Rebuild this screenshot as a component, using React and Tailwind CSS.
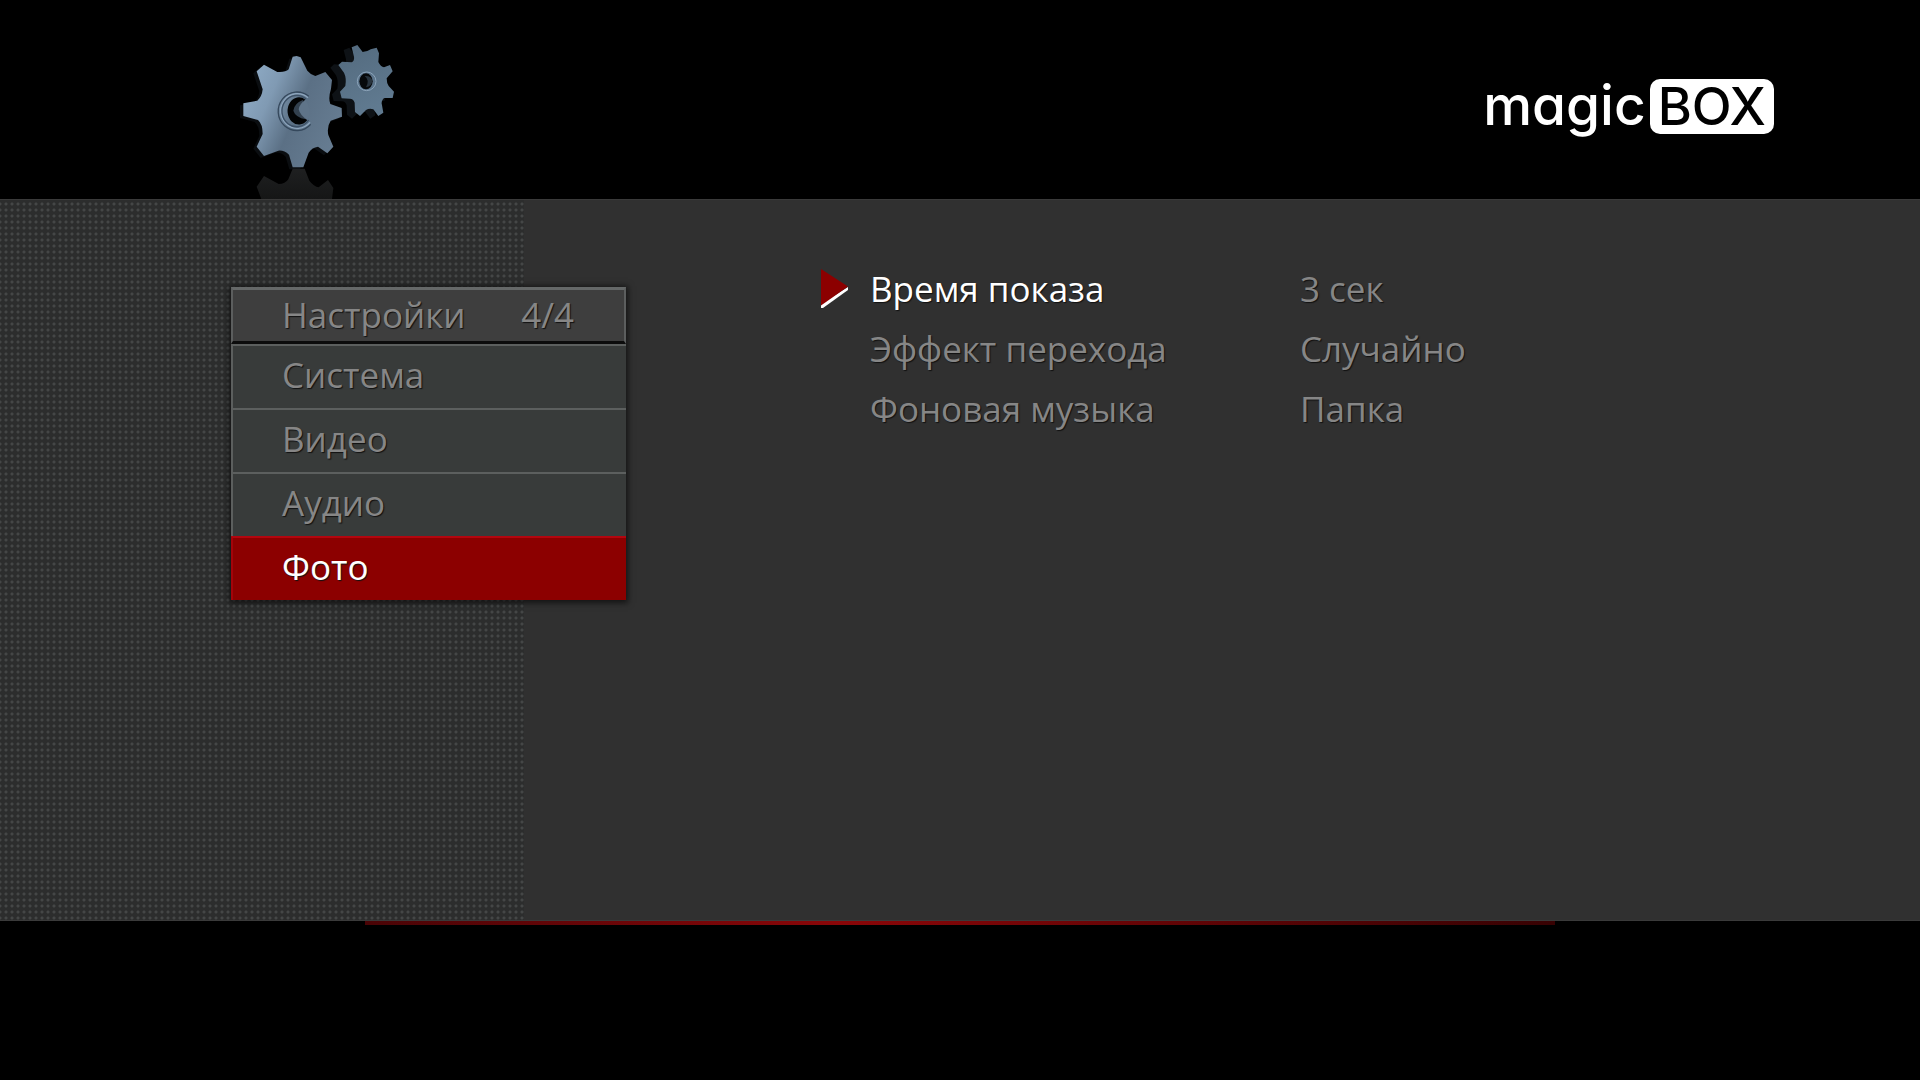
import { useState } from "react";
import clsx from "clsx";

const categories = ["Система", "Видео", "Аудио", "Фото"];

const settings = [
  { label: "Время показа", value: "3 сек" },
  { label: "Эффект перехода", value: "Случайно" },
  { label: "Фоновая музыка", value: "Папка" },
];

const bigGear =
  "M218 80L230 78L242 82L262 122Q272 134 286 138L316 126L336 150L333 176Q324 205 331 222L365 234L366 260L332 272Q320 290 325 315L340 350L322 370L294 350Q276 352 266 368L250 412L218 412L207 374Q192 360 175 362L132 378L110 350L128 312Q128 282 114 270L70 258L70 220L112 212Q126 200 128 178L110 124L132 104L172 126Q196 128 206 118Z";

const smallGear =
  "M395 52L412 45L428 66Q442 66 452 58L470 53L477 70L475 96Q482 110 492 112L510 105L518 124L500 145Q500 160 506 168L522 185L518 204L492 204Q482 214 486 226L490 248L475 258L460 238Q448 234 438 240L420 258L405 246L404 218Q400 206 390 206L365 205L360 185L376 168Q380 144 372 128L355 105L366 95L395 97Q404 92 402 80Z";

const GearsIcon = () => (
  <svg viewBox="0 0 600 507" className="h-[169px] w-[200px]" aria-hidden="true">
    <defs>
      <linearGradient id="bigFace" x1="0.05" y1="0.25" x2="0.95" y2="0.7">
        <stop offset="0" stopColor="#8ca8c2" />
        <stop offset="0.25" stopColor="#809ab3" />
        <stop offset="0.55" stopColor="#5b7085" />
        <stop offset="1" stopColor="#667c91" />
      </linearGradient>
      <linearGradient id="smallFace" x1="0" y1="0" x2="0.4" y2="1">
        <stop offset="0" stopColor="#536a7e" />
        <stop offset="1" stopColor="#607a90" />
      </linearGradient>
      <linearGradient id="mirror" x1="0" y1="412" x2="0" y2="507" gradientUnits="userSpaceOnUse">
        <stop offset="0" stopColor="#1f2021" />
        <stop offset="1" stopColor="#151616" />
      </linearGradient>
    </defs>

    {/* --- Side faces behind each gear --- */}
    <path d={smallGear} fill="#0e1216" transform="translate(-24 8)" />
    <path d={bigGear} fill="#0a0d10" transform="translate(-10 6)" />

    <path d={smallGear} fill="url(#smallFace)" />
    <circle cx="440" cy="154" r="31" fill="#5b748b" />
    <circle cx="440" cy="154" r="28" fill="none" stroke="#8ba3b8" strokeWidth="3" />
    <ellipse cx="438" cy="154" rx="20" ry="24" fill="#07090b" />
    <path d="M434 138Q450 150 438 172Q456 168 457 152Q455 137 434 138Z" fill="#28333d" />

    <path d={bigGear} fill="url(#bigFace)" />
    <path
      d="M266 199A56 58 0 1 0 272 283"
      fill="none"
      stroke="#35485c"
      strokeWidth="4"
    />
    <path
      d="M264 203A50 52 0 1 0 270 277"
      fill="none"
      stroke="#8da5bd"
      strokeWidth="4"
    />
    <path
      d="M258 207A44 47 0 1 0 266 270"
      fill="none"
      stroke="#3c5066"
      strokeWidth="4"
    />
    <path d="M256 209A34 41 0 1 0 262 270Q248 262 247 240Q248 220 256 209Z" fill="#030405" />
    <path d="M250 209Q222 220 220 242Q226 262 258 268Q244 240 250 209Z" fill="#33414f" />
    <path d="M256 209Q238 222 236 238Q240 256 262 270Q278 240 256 209Z" fill="#5f7489" />

    {/* --- Floor reflection --- */}
    <path
      d="M218 416L254 416L268 452Q282 470 296 472L324 450L340 474L336 507L124 507L110 470L132 438L176 462Q196 462 205 448Z"
      fill="url(#mirror)"
    />
  </svg>
);

const Logo = () => (
  <div className="flex items-start gap-1 font-['Inter',sans-serif] font-medium text-white">
    <span className="pt-[9px] text-[55px] leading-[64px] [font-feature-settings:'cv11']">magic</span>
    <span className="mt-[15px] rounded-[10px] bg-white px-2 text-[52px] leading-[55px] text-black">
      BOX
    </span>
  </div>
);

const Menu = ({ active, onSelect }) => (
  <nav className="w-[395px] shrink-0 self-start bg-[#383b3a] shadow-[0_1px_6px_2px_rgba(0,0,0,0.6)]">
    <h1 className="flex h-[57px] items-center justify-between border-x-2 border-t-3 border-b-3 border-x-[#5c5e5e] border-t-[#656868] border-b-[#0c0c0c] bg-[#3e3e3e] pr-[50px] pl-[49px] text-shadow-[1px_1px_1px_#111]">
      <span>Настройки</span>
      <span>4/4</span>
    </h1>
    <ul>
      {categories.map((name) => (
        <li key={name}>
          <button
            type="button"
            onClick={() => onSelect(name)}
            className={clsx(
              "block h-16 w-full border-t-2 border-l-2 pb-1 pl-[49px] text-left text-shadow-[1px_1px_1px_#111]",
              name === active
                ? "border-t-[#b3060f] border-l-[#a3040a] bg-[#8c0000] text-white"
                : "border-[#5c5f5e]"
            )}
          >
            {name}
          </button>
        </li>
      ))}
    </ul>
  </nav>
);

const App = () => {
  const [active, setActive] = useState("Фото");

  return (
    <div className="flex min-h-screen flex-col bg-black font-['Open_Sans','Noto_Sans',sans-serif] text-[35px] text-[#868686]">
      <header className="flex h-[199px] items-start justify-between pt-[30px] pr-[146px] pl-[220px]">
        <GearsIcon />
        <div className="pt-[34px]">
          <Logo />
        </div>
      </header>

      <main className="flex flex-1 border-y border-t-[#3a3a3a] border-b-[#3a3a3a] bg-[#303030]">
        {/* --- Dotted strip, the menu hangs over its right edge --- */}
        <div className="flex w-[524px] shrink-0 bg-[radial-gradient(circle_at_3px_4px,#464848_0,#444646_1px,#2c2d2d_2px)] bg-size-[6px_6px] bg-position-[3px_0px] pt-[87px] pl-[231px]">
          <Menu active={active} onSelect={setActive} />
        </div>

        <dl className="flex-1 pt-[59px] pl-[296px]">
          {settings.map(({ label, value }, i) => (
            <div
              key={label}
              className="flex h-[60px] items-center text-shadow-[1px_1px_1px_#111]"
            >
              <dt className={clsx("flex w-[480px] items-center", i === 0 && "text-white")}>
                <span className="w-[50px]">
                  {i === 0 && (
                    <svg viewBox="0 0 28 40" className="h-10 w-7" aria-hidden="true">
                      <path d="M1 35L28 18V21L3 39L1 39Z" fill="#fff" />
                      <path d="M1 0L28 17.500L1 36.500Z" fill="#8c0000" />
                    </svg>
                  )}
                </span>
                {label}
              </dt>
              <dd>{value}</dd>
            </div>
          ))}
        </dl>
      </main>

      <footer className="h-[159px]">
        <div className="mx-auto h-1 w-[62%] bg-linear-to-r from-[#4a0406] via-[#8a0608] via-40% to-[#380203]" />
      </footer>
    </div>
  );
};

export default App;
